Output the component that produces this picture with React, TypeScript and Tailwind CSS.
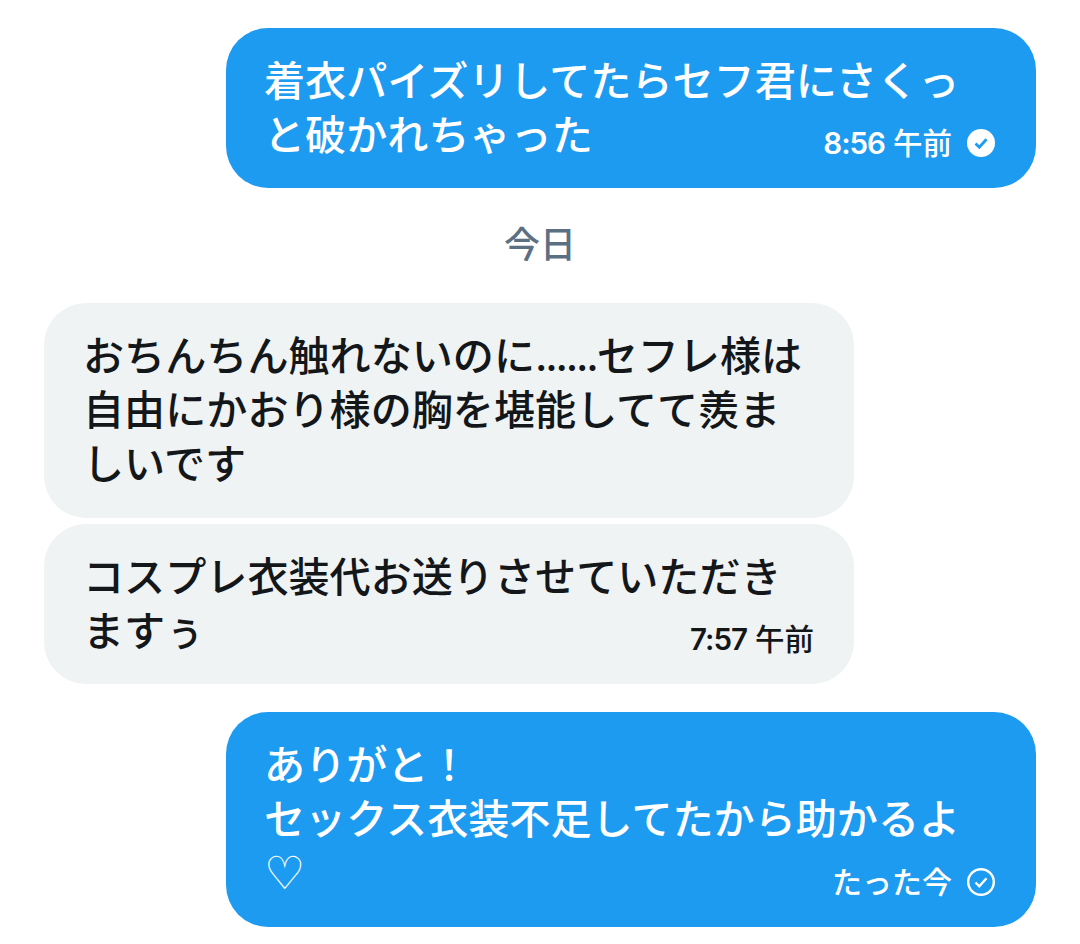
import { ReactNode } from 'react';

function ReadIcon({ filled }: { filled: boolean }) {
  if (filled) {
    return (
      <svg viewBox="0 0 28 28" className="w-7 h-7 ml-[15px]">
        <circle cx="14" cy="14" r="14" fill="#fff" />
        <path d="M8.5 14.5l3.8 3.8 7.2-8" fill="none" stroke="#1d9bf0" strokeWidth="2.8" />
      </svg>
    );
  }
  return (
    <svg viewBox="0 0 28 28" className="w-7 h-7 ml-[15px]">
      <circle cx="14" cy="14" r="12.8" fill="none" stroke="#fff" strokeWidth="2.4" />
      <path d="M8.5 14.5l3.8 3.8 7.2-8" fill="none" stroke="#fff" strokeWidth="2.4" />
    </svg>
  );
}

function Sent({ children, time, filled, className }: { children: ReactNode; time: ReactNode; filled: boolean; className: string }) {
  return (
    <div className={`relative w-[810px] self-end rounded-[42px] bg-[#1d9bf0] text-white pl-[38px] pr-10 pt-[26px] ${className}`}>
      <div className="text-[41.1px] leading-[54px] font-medium">{children}</div>
      <div className="absolute right-[41px] bottom-[30px] flex items-center leading-[30px] font-medium">
        {time}
        <ReadIcon filled={filled} />
      </div>
    </div>
  );
}

function Clock({ value }: { value: string }) {
  return (
    <span className="flex text-[29.5px]">
      <span className="font-semibold tracking-[-1px]">{value}</span>
      <span className="ml-2">午前</span>
    </span>
  );
}

export default function App() {
  return (
    <div className="w-[1080px] h-[944px] bg-white flex flex-col px-[44px] pt-[28px] overflow-hidden font-['Inter','Noto_Sans_CJK_JP',sans-serif] text-[#14171a]">
      <Sent time={<Clock value="8:56" />} filled className="h-[160px]">
        着衣パイズリしてたらセフ君にさくっ<br />と破かれちゃった
      </Sent>

      <div className="mt-[32px] h-[50px] flex items-center justify-center text-[36px] font-medium text-[#5b7083]">今日</div>

      <div className="mt-[33px] w-[810px] h-[215px] rounded-[42px] bg-[#eff3f4] pl-[39px] pt-[26px] text-[41.1px] leading-[54px] font-medium">
        おちんちん触れないのに<span className="tracking-[-2.2px]">......</span>セフレ様は<br />自由にかおり様の胸を堪能してて羨ま<br />しいです
      </div>

      <div className="relative mt-[6px] w-[810px] h-[160px] rounded-[42px] bg-[#eff3f4] pl-[39px] pt-[26px] text-[41.1px] leading-[54px] font-medium">
        コスプレ衣装代お送りさせていただき<br />ますぅ
        <div className="absolute right-10 bottom-[30px] leading-[30px] font-medium">
          <Clock value="7:57" />
        </div>
      </div>

      <Sent time={<span className="text-[30px]">たった今</span>} filled={false} className="mt-[28px] h-[215px]">
        ありがと！<br />セックス衣装不足してたから助かるよ<br /><span className="font-['DejaVu_Sans'] font-normal text-[46px]">♡</span>
      </Sent>
    </div>
  );
}
